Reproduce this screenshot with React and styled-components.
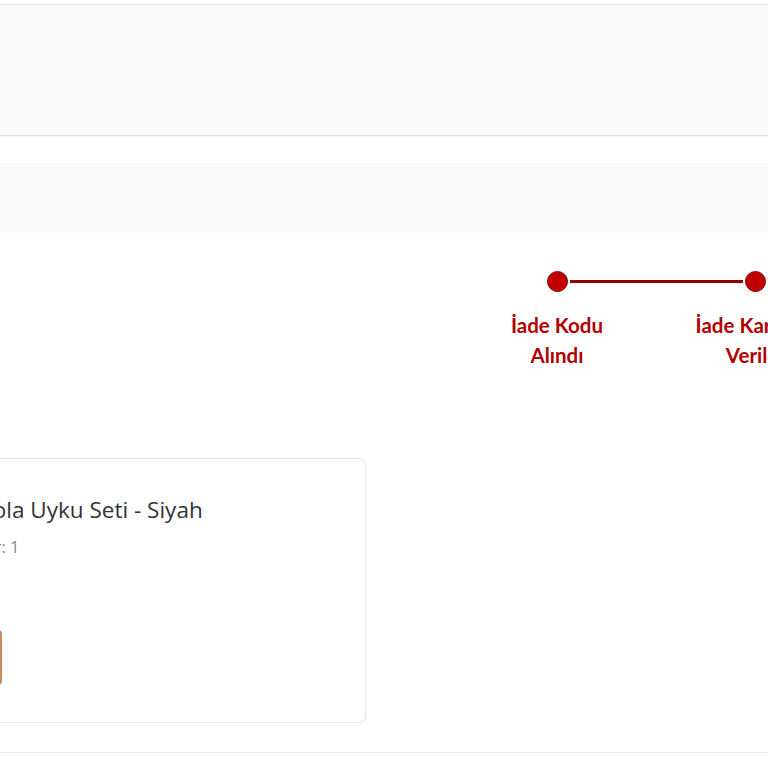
import React from 'react';
import styled, { createGlobalStyle } from 'styled-components';

const GlobalStyle = createGlobalStyle`
  html, body {
    margin: 0;
    padding: 0;
    background: #fff;
    font-family: Lato, 'Open Sans', Arial, sans-serif;
  }
`;

const Page = styled.div`
  width: 768px;
  height: 768px;
  overflow: hidden;
  display: flex;
  flex-direction: column;
`;

const HeaderPanel = styled.div`
  margin: 4px -12px 0;
  height: 130px;
  background: #fafafa;
  border: 1px solid #e2e2e2;
  box-shadow: 0 1px 2px rgba(0, 0, 0, 0.05);
`;

const InfoBand = styled.div`
  margin-top: 27px;
  height: 70px;
  background: #fafafa;
`;

const Stepper = styled.div`
  display: grid;
  grid-template-columns: repeat(3, 198px);
  margin: 37px 0 0 458px;
`;

const Step = styled.div`
  display: flex;
  flex-direction: column;
  align-items: center;
`;

const Track = styled.div`
  display: flex;
  align-items: center;
  width: 100%;
  height: 22px;
`;

const Connector = styled.div`
  flex: 1;
  height: 3px;
  background: ${({ $blank }) => ($blank ? 'transparent' : '#8f0000')};
`;

const Dot = styled.div`
  width: 19px;
  height: 19px;
  margin: 0 2px;
  border-radius: 50%;
  background: #c00000;
  border: 1px solid #8a0000;
`;

const StepLabel = styled.div`
  margin-top: 18px;
  font-size: 20.5px;
  line-height: 30px;
  font-weight: 700;
  color: #b00000;
  text-align: center;
  white-space: pre-line;
`;

const ProductCard = styled.div`
  display: flex;
  margin: 88px 0 0 -268px;
  flex-shrink: 0;
  width: 632px;
  height: 263px;
  background: #fff;
  border: 1px solid #e6e6e6;
  border-radius: 7px;
  box-shadow: 0 1px 3px rgba(0, 0, 0, 0.04);
`;

const Thumb = styled.div`
  width: 160px;
  margin: 24px 0 0 24px;
  height: 150px;
  background: #eee;
`;

const ProductInfo = styled.div`
  display: flex;
  flex-direction: column;
  padding: 36px 0 0 35px;
`;

const ProductTitle = styled.div`
  font-family: 'Open Sans', Arial, sans-serif;
  font-size: 22.5px;
  line-height: 30px;
  color: #333;
  white-space: nowrap;
`;

const Quantity = styled.div`
  margin-top: 10px;
  font-family: 'Open Sans', Arial, sans-serif;
  font-size: 16.5px;
  line-height: 24px;
  color: #8a8a8a;
`;

const ActionButton = styled.button`
  margin-top: 71px;
  align-self: flex-start;
  width: 50px;
  height: 55px;
  padding: 0;
  border: none;
  border-radius: 4px;
  background: #c98a5e;
`;

const Divider = styled.div`
  margin: 29px -10px 0;
  flex-shrink: 0;
  height: 1px;
  background: #e6e6e6;
`;

const steps = [
  { label: 'İade Kodu\nAlındı' },
  { label: 'İade Kargoya\nVerildi' },
  { label: 'İade\nOnaylandı' },
];

export default function App() {
  return (
    <Page>
      <GlobalStyle />
      <HeaderPanel />
      <InfoBand />
      <Stepper>
        {steps.map((s, i) => (
          <Step key={s.label}>
            <Track>
              <Connector $blank={i === 0} />
              <Dot />
              <Connector $blank={i === steps.length - 1} />
            </Track>
            <StepLabel>{s.label}</StepLabel>
          </Step>
        ))}
      </Stepper>
      <ProductCard>
        <Thumb />
        <ProductInfo>
          <ProductTitle>Babola Uyku Seti - Siyah</ProductTitle>
          <Quantity>Miktar: 1</Quantity>
          <ActionButton />
        </ProductInfo>
      </ProductCard>
      <Divider />
    </Page>
  );
}
